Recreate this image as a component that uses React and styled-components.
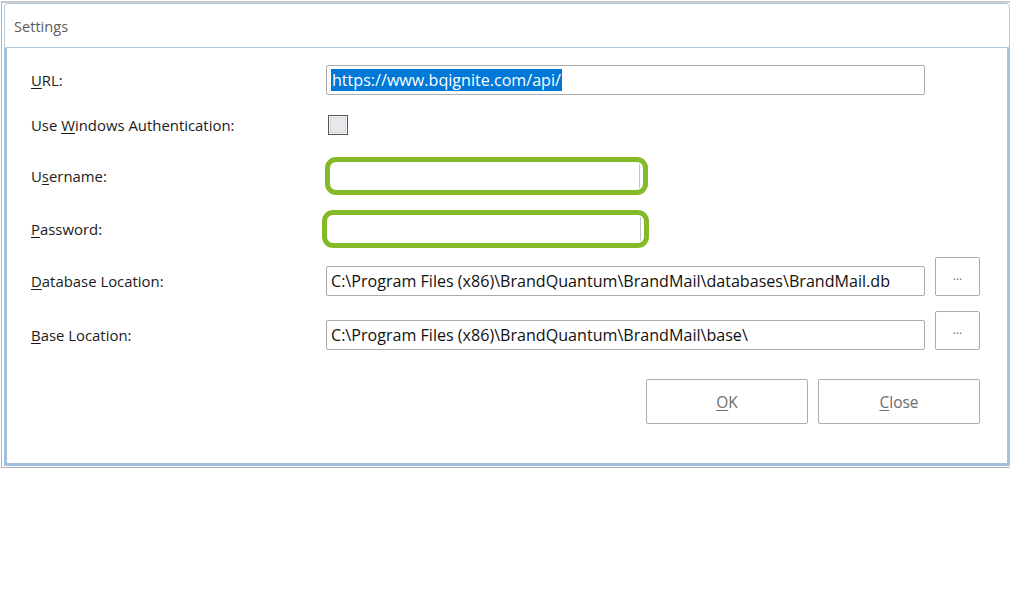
import React from "react";
import styled, { createGlobalStyle } from "styled-components";

const Global = createGlobalStyle`
  html, body { margin: 0; padding: 0; background: #ffffff; }
  body { font-family: "Open Sans", "Noto Sans", sans-serif; color: #1b1b1b; }
`;

const Page = styled.div`
  width: 1011px;
  height: 600px;
  background: #fff;
  padding-top: 1px;
  box-sizing: border-box;
`;

const Frame = styled.div`
  width: 1009px;
  margin-left: 1px;
  border-top: 2px solid #c9c9c9;
  border-left: 1px solid #b4b4b4;
  border-bottom: 1px solid #b4b4b4;
  padding: 0 0 1px 1px;
  box-sizing: border-box;
`;

const TitleBar = styled.div`
  height: 43px;
  margin-left: 1px;
  border: 1px solid #b3cce5;
  border-radius: 4px 4px 0 0;
  display: flex;
  align-items: center;
  padding-left: 9px;
  font-size: 14.6px;
  color: #5e5e5e;
  background: #fff;
`;

const Body = styled.div`
  margin-left: 1px;
  height: 418px;
  box-sizing: border-box;
  border: 3px solid #a2c1e1;
  border-top: none;
  padding: 17px 0 0 24px;
  display: flex;
  flex-direction: column;
`;

const Row = styled.div`
  display: grid;
  grid-template-columns: 295px 599px 10px 45px;
  align-items: center;
  height: ${(p) => p.$h}px;
  margin-top: ${(p) => p.$mt || 0}px;
`;

const Label = styled.div`
  font-size: 14.9px;
  color: #1b1b1b;
  align-self: ${(p) => p.$self || "auto"};
  margin-bottom: ${(p) => p.$mb || 0}px;
  u { text-decoration: underline; text-underline-offset: 2px; }
`;

const TextBox = styled.div`
  height: 30px;
  box-sizing: border-box;
  border: 1px solid #ababab;
  border-radius: 2px;
  display: flex;
  align-items: center;
  padding-left: 4px;
  font-size: 16.1px;
  color: #111;
  white-space: nowrap;
  overflow: hidden;
  align-self: ${(p) => p.$self || "auto"};
`;

const Selected = styled.span`
  background: #0078d7;
  color: #fff;
  line-height: 22px;
  padding: 0 1px;
`;

const CheckBox = styled.div`
  width: 20px;
  height: 20px;
  margin-left: 2px;
  box-sizing: border-box;
  border: 1px solid #555;
  background: #e6e8eb;
  box-shadow: inset 0 0 0 1px #f5f6f7, inset 0 0 0 2px #d4d6d9;
`;

const GreenBox = styled.div`
  width: ${(p) => p.$w}px;
  height: 38px;
  margin-left: ${(p) => p.$ml}px;
  box-sizing: border-box;
  border: 5.5px solid #84b928;
  border-radius: 11px;
  background: #fff;
  position: relative;
  &::after {
    content: "";
    position: absolute;
    right: 3px;
    top: 2px;
    bottom: 2px;
    width: 1px;
    background: #c4c4c4;
  }
`;

const SmallButton = styled.button`
  grid-column: 4;
  width: 45px;
  height: 39px;
  box-sizing: border-box;
  border: 1px solid #adadad;
  border-radius: 2px;
  background: #fff;
  color: #6b6b6b;
  font-family: inherit;
  font-size: 12px;
  padding: 0 0 2px;
  align-self: start;
`;

const ButtonRow = styled.div`
  display: flex;
  justify-content: flex-end;
  gap: 10px;
  width: 949px;
  margin-top: 29px;
`;

const DialogButton = styled.button`
  width: 162px;
  height: 45px;
  box-sizing: border-box;
  border: 1px solid #adadad;
  border-radius: 2px;
  background: #fff;
  color: #6d6d6d;
  font-family: inherit;
  font-size: 15.5px;
  u { text-underline-offset: 2px; }
`;

export default function App() {
  return (
    <Page>
      <Global />
      <Frame>
        <TitleBar>Settings</TitleBar>
        <Body>
          <Row $h={30}>
            <Label><u>U</u>RL:</Label>
            <TextBox>
              <Selected>https://www.bqignite.com/api/</Selected>
            </TextBox>
          </Row>
          <Row $h={20} $mt={20}>
            <Label>Use <u>W</u>indows Authentication:</Label>
            <CheckBox />
          </Row>
          <Row $h={38} $mt={22}>
            <Label>U<u>s</u>ername:</Label>
            <GreenBox $w={323} $ml={-1} />
          </Row>
          <Row $h={38} $mt={15}>
            <Label><u>P</u>assword:</Label>
            <GreenBox $w={327} $ml={-4} />
          </Row>
          <Row $h={39} $mt={9}>
            <Label $self="end" $mb={5}><u>D</u>atabase Location:</Label>
            <TextBox $self="end">C:\Program Files (x86)\BrandQuantum\BrandMail\databases\BrandMail.db</TextBox>
            <span />
            <SmallButton>...</SmallButton>
          </Row>
          <Row $h={39} $mt={15}>
            <Label $self="end" $mb={5}><u>B</u>ase Location:</Label>
            <TextBox $self="end">C:\Program Files (x86)\BrandQuantum\BrandMail\base\</TextBox>
            <span />
            <SmallButton>...</SmallButton>
          </Row>
          <ButtonRow>
            <DialogButton><u>O</u>K</DialogButton>
            <DialogButton><u>C</u>lose</DialogButton>
          </ButtonRow>
        </Body>
      </Frame>
    </Page>
  );
}
